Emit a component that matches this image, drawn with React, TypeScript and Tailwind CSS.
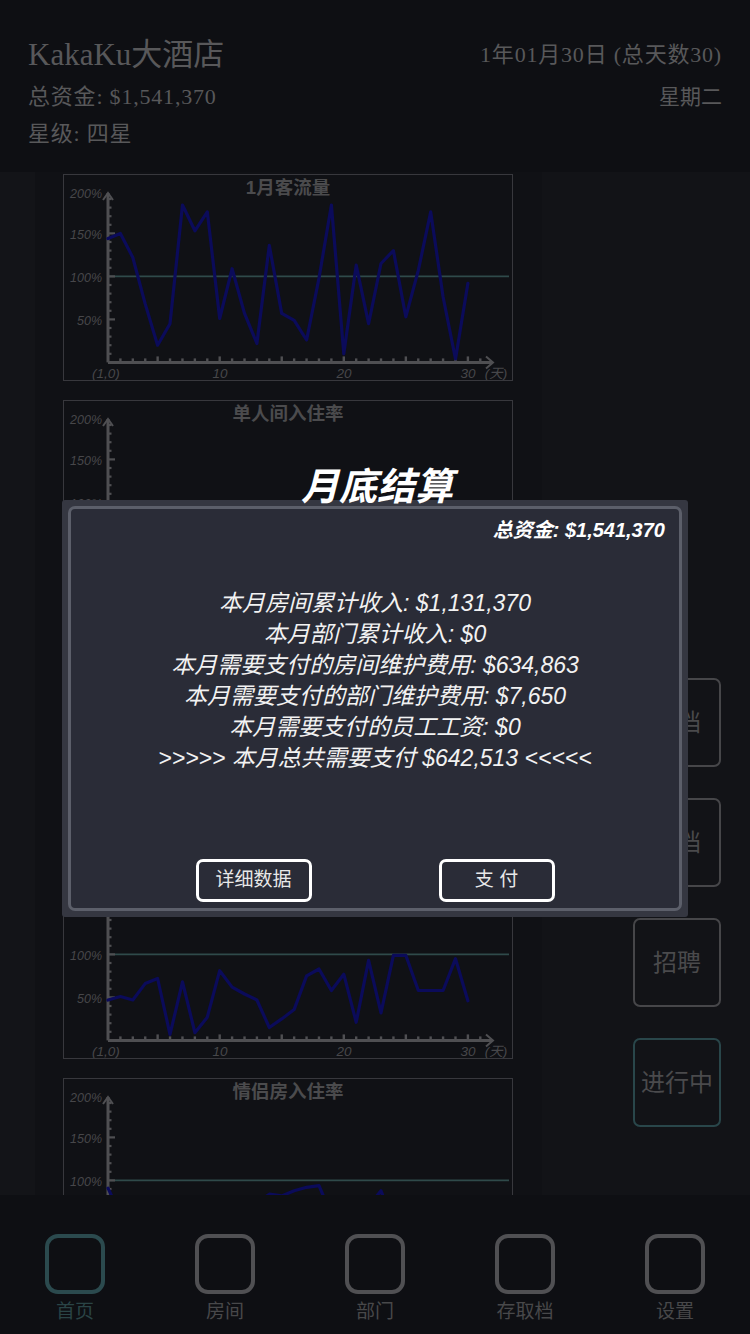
import React from 'react';

const SANS = '"Liberation Sans", "Noto Sans CJK SC", sans-serif';
const SERIF = '"Liberation Serif", "Noto Sans CJK SC", serif';

// chart geometry (coordinates relative to the chart box)
const X0 = 45;
const Y0 = 188.4;
const XS = 12.41;
const YS = 0.86;

type ChartProps = { title: string; data: number[] };

function LineChart({ title, data }: ChartProps) {
  const pts = data
    .map((v, i) => `${(X0 + i * XS).toFixed(1)},${(Y0 - v * YS).toFixed(1)}`)
    .join(' ');
  const xTicks = Array.from({ length: 30 }, (_, i) => i + 2);
  const yTicks = Array.from({ length: 19 }, (_, i) => (i + 1) * 10);
  const yLabels = [200, 150, 100, 50];
  const xLabels: [string, number][] = [
    ['(1,0)', 43],
    ['10', 157],
    ['20', 281],
    ['30', 405],
    ['(天)', 433],
  ];
  return (
    <div className="h-[207px] w-[450px] shrink-0 border border-[#38383d]">
      <svg width="448" height="205" viewBox="1 1 448 205" style={{ display: 'block', fontFamily: SANS }}>
        <text x="225" y="20" textAnchor="middle" fontSize="18.5" fontWeight="700" fill="#4b4b4d">
          {title}
        </text>
        {yLabels.map((v) => (
          <text
            key={v}
            x="39"
            y={Y0 - v * YS + 6 + (v === 200 ? 2 : 0)}
            textAnchor="end"
            fontSize="12.5"
            fontStyle="italic"
            fill="#47474a"
          >
            {v}%
          </text>
        ))}
        {xLabels.map(([t, x]) => (
          <text key={t} x={x} y="203.5" textAnchor="middle" fontSize="13.5" fontStyle="italic" fill="#47474a">
            {t}
          </text>
        ))}
        {/* reference line at 100% */}
        <line x1={X0} y1={Y0 - 100 * YS} x2="446" y2={Y0 - 100 * YS} stroke="#2f4a4a" strokeWidth="1.6" />
        {/* axes */}
        <line x1={X0} y1={Y0} x2={X0} y2="19" stroke="#4f4f52" strokeWidth="3" />
        <line x1={X0} y1={Y0} x2="430" y2={Y0} stroke="#4f4f52" strokeWidth="3" />
        <polyline points={`${X0 - 5},26 ${X0},19 ${X0 + 5},26`} fill="none" stroke="#4f4f52" strokeWidth="2" />
        <polyline points={`423,${Y0 - 6} 430,${Y0} 423,${Y0 + 6}`} fill="none" stroke="#4f4f52" strokeWidth="2" />
        {xTicks.map((d) => {
          const x = X0 + (d - 1) * XS;
          const h = d % 5 === 0 ? 6 : 4;
          return <line key={d} x1={x} y1={Y0} x2={x} y2={Y0 - h} stroke="#4f4f52" strokeWidth="2.4" />;
        })}
        {yTicks.map((v) => {
          const y = Y0 - v * YS;
          const w = v % 50 === 0 ? 7 : 3.5;
          return <line key={v} x1={X0} y1={y} x2={X0 + w} y2={y} stroke="#4f4f52" strokeWidth="2.2" />;
        })}
        <polyline
          points={pts}
          fill="none"
          stroke="#0b0b5a"
          strokeWidth="3.2"
          strokeLinejoin="round"
          strokeLinecap="round"
        />
      </svg>
    </div>
  );
}

const charts: ChartProps[] = [
  {
    title: '1月客流量',
    data: [144, 150, 122, 68, 20, 45, 183, 153, 175, 51, 109, 57, 22, 136, 57, 49, 26, 98, 183, 10, 113, 45, 115, 130, 53, 107, 175, 76, 4, 92],
  },
  {
    title: '单人间入住率',
    data: [62, 70, 55, 80, 48, 66, 74, 58, 90, 52, 60, 71, 45, 68, 77, 59, 83, 64, 50, 72, 69, 88, 57, 63, 75, 54, 81, 67, 73, 60],
  },
  {
    title: '标准间入住率',
    data: [55, 48, 72, 60, 38, 66, 80, 52, 45, 70, 62, 35, 58, 76, 49, 64, 71, 40, 57, 83, 61, 46, 69, 74, 52, 59, 66, 43, 78, 55],
  },
  {
    title: '双人间入住率',
    data: [47, 51, 47, 66, 72, 7, 68, 9, 27, 81, 62, 54, 47, 15, 25, 36, 75, 83, 58, 77, 21, 93, 32, 99, 99, 58, 58, 58, 95, 46],
  },
  {
    title: '情侣房入住率',
    data: [91, 60, 55, 72, 40, 66, 58, 70, 62, 48, 52, 69, 74, 84, 82, 88, 92, 94, 60, 55, 45, 70, 88, 50, 62, 58, 40, 66, 54, 70],
  },
];

const sideButtons = [
  { label: '存档', active: false },
  { label: '读档', active: false },
  { label: '招聘', active: false },
  { label: '进行中', active: true },
];

const navItems = ['首页', '房间', '部门', '存取档', '设置'];

const summaryLines = [
  '本月房间累计收入: $1,131,370',
  '本月部门累计收入: $0',
  '本月需要支付的房间维护费用: $634,863',
  '本月需要支付的部门维护费用: $7,650',
  '本月需要支付的员工工资: $0',
  '>>>>> 本月总共需要支付 $642,513 <<<<<',
];

export default function App() {
  return (
    <div className="relative flex h-[1334px] w-[750px] flex-col overflow-hidden bg-[#121317]">
      {/* top status header */}
      <header
        className="flex h-[172px] shrink-0 justify-between bg-[#0e0f13] px-[28px] pt-[37px] text-[#58585a]"
        style={{ fontFamily: SERIF }}
      >
        <div className="flex flex-col">
          <div className="text-[31px] leading-[36px]">KakaKu大酒店</div>
          <div className="mt-[6px] text-[22px] leading-[36px] tracking-[0.8px]">总资金: $1,541,370</div>
          <div className="mt-[1px] text-[22px] leading-[36px] tracking-[0.8px]">星级: 四星</div>
        </div>
        <div className="flex flex-col items-end">
          <div className="text-[22px] leading-[36px] tracking-[0.8px]">1年01月30日 (总天数30)</div>
          <div className="mt-[6px] text-[21px] leading-[36px]">星期二</div>
        </div>
      </header>

      {/* main area */}
      <div className="flex h-[1023px] shrink-0 overflow-hidden">
        <div className="w-[35px] shrink-0 bg-[#131418]" />
        <div className="flex w-[507px] shrink-0 flex-col gap-[19px] overflow-hidden bg-[#101115] pl-[28px] pt-[2px]">
          {charts.map((c) => (
            <LineChart key={c.title} title={c.title} data={c.data} />
          ))}
        </div>
        <div
          className="flex flex-1 flex-col items-end gap-[31px] bg-[#121317] pr-[29px] pt-[506px]"
          style={{ fontFamily: SANS }}
        >
          {sideButtons.map((b) => (
            <div
              key={b.label}
              className={`flex h-[89px] w-[88px] items-center justify-center rounded-[7px] border-[2.5px] text-[24px] text-[#4a4a4c] ${
                b.active ? 'border-[#29464a]' : 'border-[#464649]'
              }`}
            >
              {b.label}
            </div>
          ))}
        </div>
      </div>

      {/* bottom navigation */}
      <nav className="grid h-[139px] shrink-0 grid-cols-5 bg-[#0e0f13]" style={{ fontFamily: SANS }}>
        {navItems.map((n, i) => (
          <div key={n} className="flex flex-col items-center pt-[39px]">
            <div
              className={`h-[60px] w-[60px] rounded-[13px] border-[4px] ${
                i === 0 ? 'border-[#2b4a4e]' : 'border-[#505053]'
              }`}
            />
            <div className={`mt-[6px] text-[19px] leading-[24px] ${i === 0 ? 'text-[#2a4446]' : 'text-[#48484a]'}`}>
              {n}
            </div>
          </div>
        ))}
      </nav>

      {/* month-end settlement dialog */}
      <div
        className="absolute left-[62px] top-[500px] h-[417px] w-[626px] rounded-[3px] bg-[#353741] p-[6px]"
        style={{ fontFamily: SANS }}
      >
        <div className="absolute left-0 right-0 top-[-35px] pl-[4px] text-center text-[38px] font-bold italic leading-[44px] text-white">
          月底结算
        </div>
        <div className="flex h-full flex-col rounded-[7px] border-[3px] border-[#5c5f6a] bg-[#2a2c37]">
          <div className="pr-[14px] pt-[9px] text-right text-[20px] font-bold italic leading-[24px] text-white">
            总资金: $1,541,370
          </div>
          <div className="mt-[46px] flex flex-col items-center text-[23px] italic leading-[31px] text-[#f2f2f2]">
            {summaryLines.map((l) => (
              <div key={l} className="whitespace-pre">
                {l}
              </div>
            ))}
          </div>
          <div className="flex-1" />
          <div className="flex justify-center gap-[127px] pb-[6px]">
            <button className="flex h-[43px] w-[116px] items-center justify-center rounded-[7px] border-[3px] border-white text-[19px] text-[#e8e8e8]">
              详细数据
            </button>
            <button className="flex h-[43px] w-[116px] items-center justify-center rounded-[7px] border-[3px] border-white text-[19px] text-[#e8e8e8]">
              支 付
            </button>
          </div>
        </div>
      </div>
    </div>
  );
}
